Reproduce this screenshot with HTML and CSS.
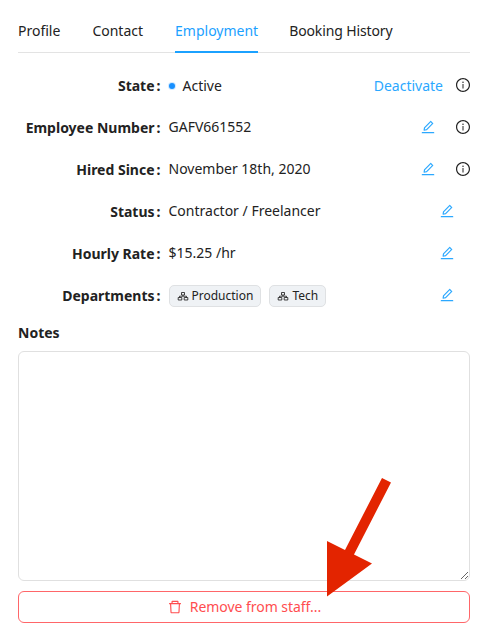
FILE: index.html
```html
<!DOCTYPE html>
<html lang="en">
<head>
<meta charset="utf-8">
<title>Employment</title>
<link rel="stylesheet" href="styles.css">
</head>
<body>
<svg class="defs" aria-hidden="true">
  <symbol id="edit" viewBox="0 0 1024 1024"><path d="M257.7 752c2 0 4-.2 6-.5L431.9 722c2-.4 3.9-1.3 5.3-2.8l423.9-423.9a9.96 9.96 0 000-14.1L694.9 114.9c-1.9-1.9-4.4-2.9-7.1-2.9s-5.2 1-7.1 2.9L256.8 538.8c-1.5 1.5-2.4 3.3-2.8 5.3l-29.5 168.2a33.5 33.5 0 009.4 29.8c6.6 6.4 14.9 9.9 23.8 9.9zm67.4-174.4L687.8 215l73.3 73.3-362.7 362.6-88.9 15.7 15.6-89zM880 836H144c-17.7 0-32 14.3-32 32v36c0 4.400 3.600 8 8 8h784c4.400 0 8-3.600 8-8v-36c0-17.700-14.300-32-32-32z"/></symbol>
  <symbol id="info" viewBox="0 0 1024 1024"><path d="M512 64C264.600 64 64 264.600 64 512s200.600 448 448 448 448-200.600 448-448S759.400 64 512 64zm0 820c-205.400 0-372-166.600-372-372s166.600-372 372-372 372 166.600 372 372-166.600 372-372 372z"/><path d="M464 336a48 48 0 1096 0 48 48 0 10-96 0zm72 112h-48c-4.400 0-8 3.600-8 8v272c0 4.400 3.600 8 8 8h48c4.400 0 8-3.600 8-8V456c0-4.400-3.600-8-8-8z"/></symbol>
  <symbol id="trash" viewBox="0 0 1024 1024"><path d="M360 184h-8c4.400 0 8-3.600 8-8v8h304v-8c0 4.400 3.600 8 8 8h-8v72h72v-80c0-35.300-28.700-64-64-64H352c-35.300 0-64 28.700-64 64v80h72v-72zm504 72H160c-17.700 0-32 14.300-32 32v32c0 4.400 3.600 8 8 8h60.400l24.700 523c1.600 34.100 29.800 61 63.900 61h454c34.200 0 62.300-26.800 63.900-61l24.700-523H888c4.400 0 8-3.600 8-8v-32c0-17.700-14.300-32-32-32zM731.300 840H292.700l-24.200-512h487l-24.200 512z"/></symbol>
  <symbol id="group" viewBox="0 0 12 12"><path d="M4.500 2.500h3V5h-3zM1.200 7.500h3.600V10H1.200zM7.200 7.500h3.600V10H7.200zM6 5v1.200M2.500 7.500V6.200h7v1.300" fill="none" stroke="currentColor" stroke-width=".85"/></symbol>
</svg>
<main class="panel">
  <nav class="tabs">
    <a class="tab">Profile</a>
    <a class="tab">Contact</a>
    <a class="tab tab-active">Employment</a>
    <a class="tab">Booking History</a>
  </nav>
  <section class="rows">
    <div class="row row-state"><span class="label">State<i class="colon">:</i></span><span class="value"><i class="dot"></i>Active</span><span class="actions"><a class="link">Deactivate</a><svg class="icon"><use href="#info"/></svg></span></div>
    <div class="row"><span class="label">Employee Number<i class="colon">:</i></span><span class="value">GAFV661552</span><span class="actions"><svg class="icon edit"><use href="#edit"/></svg><svg class="icon"><use href="#info"/></svg></span></div>
    <div class="row"><span class="label">Hired Since<i class="colon">:</i></span><span class="value">November 18th, 2020</span><span class="actions"><svg class="icon edit"><use href="#edit"/></svg><svg class="icon"><use href="#info"/></svg></span></div>
    <div class="row"><span class="label">Status<i class="colon">:</i></span><span class="value">Contractor / Freelancer</span><span class="actions solo"><svg class="icon edit"><use href="#edit"/></svg></span></div>
    <div class="row"><span class="label">Hourly Rate<i class="colon">:</i></span><span class="value">$15.25 /hr</span><span class="actions solo"><svg class="icon edit"><use href="#edit"/></svg></span></div>
    <div class="row"><span class="label">Departments<i class="colon">:</i></span><span class="value tags"><span class="tag"><svg class="tag-icon"><use href="#group"/></svg>Production</span><span class="tag"><svg class="tag-icon"><use href="#group"/></svg>Tech</span></span><span class="actions solo"><svg class="icon edit"><use href="#edit"/></svg></span></div>
  </section>
  <h2 class="notes-title">Notes</h2>
  <textarea class="notes" aria-label="Notes"></textarea>
  <button class="remove"><svg class="icon"><use href="#trash"/></svg>Remove from staff...</button>
</main>
<svg class="arrow" viewBox="0 0 46 120"><path d="M55 0 64 4.500 27 76.500 45 85.500 0 118.500V63L18 72z"/></svg>
</body>
</html>
```
FILE: styles.css
```css
* { box-sizing: border-box; }
body {
  margin: 0;
  background: #fff;
  color: #222;
  font: 14px/22px "Noto Sans", "Open Sans", sans-serif;
}
.defs { display: none; }
.panel {
  display: flex;
  flex-direction: column;
  width: 488px;
  padding: 8px 18px 0;
}
.tabs {
  display: flex;
  gap: 32px;
  height: 45px;
  border-bottom: 1px solid #e3e3e3;
}
.tab { height: 45px; padding-top: 12px; white-space: nowrap; }
.tab-active { color: #1ba1ff; border-bottom: 2px solid #1ba1ff; }
.tab:last-child { margin-left: -1px; letter-spacing: -.13px; }
.rows { padding-top: 12px; }
.row {
  display: grid;
  grid-template-columns: 142.500px 1fr auto;
  column-gap: 8px;
  align-items: center;
  height: 42px;
}
.label { font-weight: 700; text-align: right; white-space: nowrap; }
.colon { margin-left: 2px; font-style: normal; }
.value { display: flex; align-items: center; padding-bottom: 2px; white-space: nowrap; }
.row-state .value { padding-bottom: 0; }
.dot {
  width: 6px;
  height: 6px;
  margin-right: 8px;
  border-radius: 50%;
  background: #1890ff;
  box-shadow: 0 0 0 1px #1890ff33;
}
.actions { display: flex; align-items: center; gap: 12px; margin-right: -1px; padding-bottom: 2px; }
.actions .edit { margin-right: 7px; }
.solo { margin-right: 0; padding-right: 8px; }
.link, .edit { color: #2ba8ff; }
.link { padding-top: 2px; }
.icon { width: 16px; height: 16px; fill: currentColor; flex: none; }
.tags { gap: 8px; padding-bottom: 1px; }
.tag {
  display: flex;
  align-items: center;
  gap: 3px;
  height: 22px;
  padding: 0 7px;
  border: 1px solid #dfe1e3;
  border-radius: 5px;
  background: #eff2f5;
  font-size: 12px;
}
.tag-icon { width: 12px; height: 12px; }
.notes-title { margin: 5px 0 7px; font-size: 14px; line-height: 22px; }
.notes {
  display: block;
  width: 452px;
  height: 230px;
  border: 1px solid #e0e0e0;
  border-radius: 6px;
  background: #fff;
  resize: vertical;
}
.remove {
  display: flex;
  align-items: center;
  justify-content: center;
  gap: 7px;
  height: 32px;
  margin-top: 10px;
  border: 1px solid #ff6669;
  border-radius: 6px;
  background: #fff;
  color: #ff4d4f;
  font: inherit;
  letter-spacing: -.04px;
}
.arrow {
  position: absolute;
  left: 327px;
  top: 478px;
  width: 46px;
  height: 120px;
  overflow: visible;
  fill: #e32400;
}
```
